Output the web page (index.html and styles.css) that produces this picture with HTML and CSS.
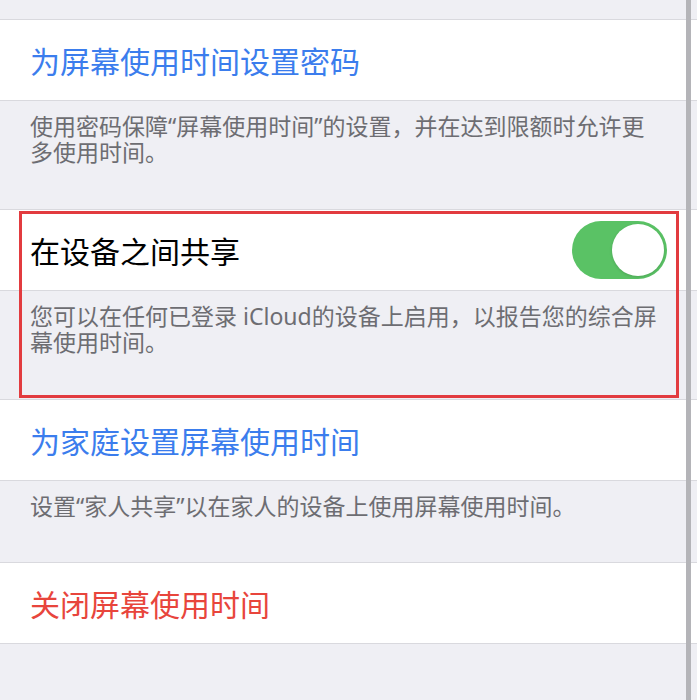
FILE: index.html
```html
<!DOCTYPE html>
<html lang="zh-CN">
<head>
    <meta charset="UTF-8">
    <meta name="viewport" content="width=device-width, initial-scale=1.0">
    <title>屏幕使用时间</title>
    <link rel="stylesheet" href="styles.css">
</head>
<body>
    <div class="settings">
        <div class="spacer-top"></div>

        <div class="cell">
            <span class="link">为屏幕使用时间设置密码</span>
        </div>
        <div class="footer">使用密码保障“屏幕使用时间”的设置，并在达到限额时允许更多使用时间。</div>

        <div class="cell">
            <span class="label">在设备之间共享</span>
            <span class="switch on"><span class="knob"></span></span>
        </div>
        <div class="footer">您可以在任何已登录 iCloud的设备上启用，以报告您的综合屏幕使用时间。</div>

        <div class="cell">
            <span class="link">为家庭设置屏幕使用时间</span>
        </div>
        <div class="footer short">设置“家人共享”以在家人的设备上使用屏幕使用时间。</div>

        <div class="cell">
            <span class="danger">关闭屏幕使用时间</span>
        </div>
        <div class="spacer-bottom"></div>

        <!-- highlight around the share option -->
        <div class="highlight"></div>
        <div class="scrollbar"></div>
    </div>
</body>
</html>
```

FILE: styles.css
```css
body {
    margin: 0;
    background: #efeff4;
    /* latin font first so quotes and iCloud stay proportional */
    font-family: "Noto Sans", "Noto Sans CJK SC", sans-serif;
}

.settings {
    position: relative;
    width: 697px;
    height: 700px;
    overflow: hidden;
}

.spacer-top {
    height: 19px;
}

.cell {
    display: flex;
    align-items: center;
    justify-content: space-between;
    height: 80px;
    padding: 0 30px;
    background: #fff;
    border-top: 1px solid #d9d9de;
    border-bottom: 1px solid #d9d9de;
    font-size: 30px;
}

.link {
    color: #3b7ded;
}

.danger {
    color: #e8453c;
}

.label {
    color: #000;
}

.footer {
    height: 96px;
    padding: 12px 40px 0 30px;
    font-size: 23px;
    line-height: 26px;
    color: #6d6d72;
}

.footer.short {
    height: 69px;
}

.switch {
    display: flex;
    align-items: center;
    justify-content: flex-end;
    width: 95px;
    height: 58px;
    padding: 0 3px;
    box-sizing: border-box;
    border-radius: 29px;
    background: #5ac265;
}

.knob {
    width: 52px;
    height: 52px;
    border-radius: 50%;
    background: #fff;
    box-shadow: 0 1px 3px rgba(0, 0, 0, 0.15);
}

.highlight {
    position: absolute;
    left: 19px;
    top: 211px;
    width: 654px;
    height: 181px;
    border: 3px solid #e23b3f;
}

.scrollbar {
    position: absolute;
    left: 686px;
    top: 0;
    width: 5px;
    height: 700px;
    background: #b4b4b8;
}
```
